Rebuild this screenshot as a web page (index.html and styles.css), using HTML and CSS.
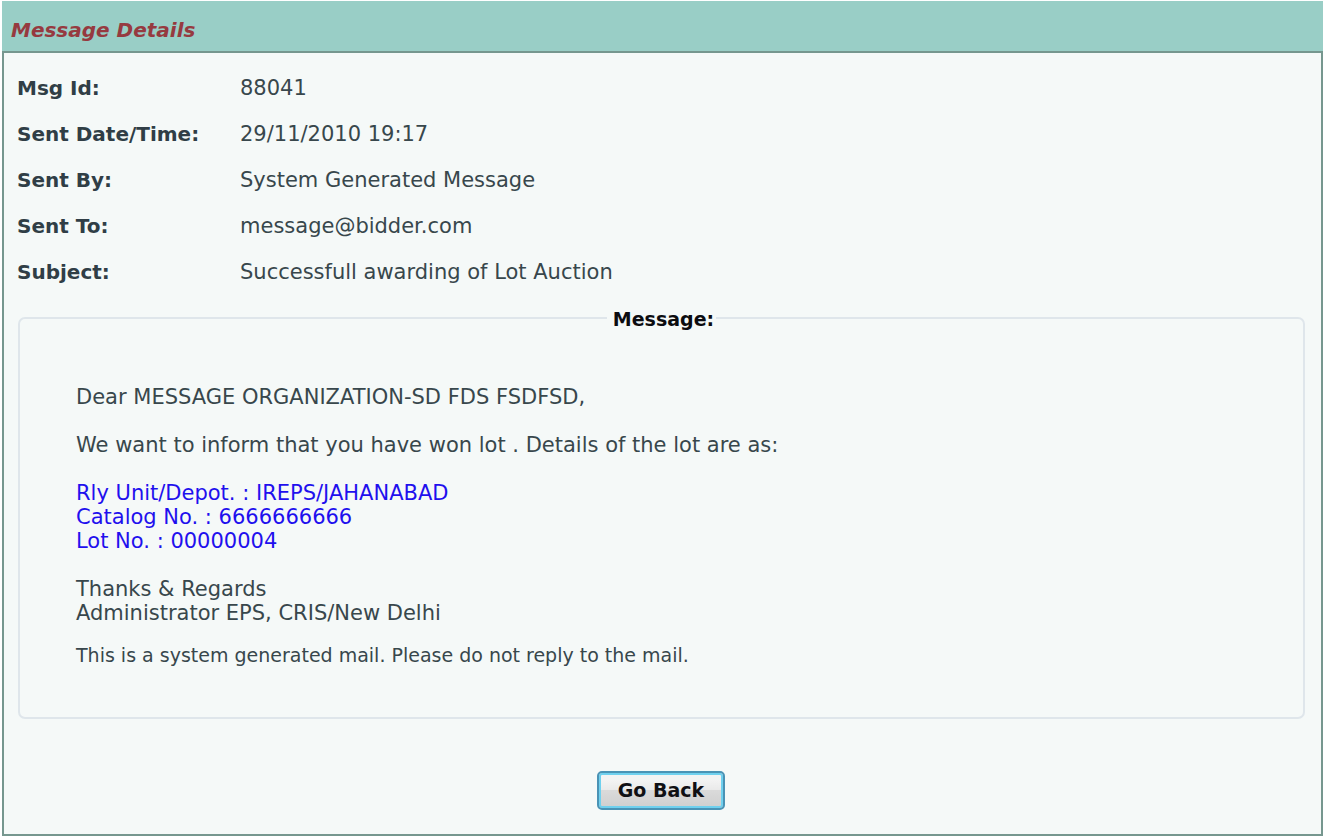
FILE: index.html
```html
<!DOCTYPE html>
<html lang="en">
<head>
<meta charset="utf-8">
<title>Message Details</title>
<link rel="stylesheet" href="styles.css">
</head>
<body>
<main class="panel">
  <h1 class="panel-title">Message Details</h1>
  <div class="panel-body">
    <table class="details">
      <tbody>
        <tr><th scope="row">Msg Id:</th><td>88041</td></tr>
        <tr><th scope="row">Sent Date/Time:</th><td>29/11/2010 19:17</td></tr>
        <tr><th scope="row">Sent By:</th><td>System Generated Message</td></tr>
        <tr><th scope="row">Sent To:</th><td>message@bidder.com</td></tr>
        <tr><th scope="row">Subject:</th><td>Successfull awarding of Lot Auction</td></tr>
      </tbody>
    </table>
    <fieldset class="message">
      <legend>Message:</legend>
      <p>Dear MESSAGE ORGANIZATION-SD FDS FSDFSD,</p>
      <p>We want to inform that you have won lot . Details of the lot are as:</p>
      <p class="lot">Rly Unit/Depot. : IREPS/JAHANABAD<br>Catalog No. : 6666666666<br>Lot No. : 00000004</p>
      <p class="signature">Thanks &amp; Regards<br>Administrator EPS, CRIS/New Delhi</p>
      <p class="note">This is a system generated mail. Please do not reply to the mail.</p>
    </fieldset>
    <div class="actions">
      <button type="button" class="back">Go Back</button>
    </div>
  </div>
</main>
</body>
</html>
```
FILE: styles.css
```css
* {
  box-sizing: border-box;
}

body {
  margin: 0;
  padding: 1px 1px 2px 2px;
  background: #fff;
  color: #38474c;
  font: 21px/24px "DejaVu Sans", Verdana, sans-serif;
}

.panel-title {
  margin: 0;
  padding: 17px 9px 9px;
  background: #99cec6;
  color: #963a40;
  font-size: 20px;
  font-style: italic;
  line-height: 24px;
}

.panel-body {
  padding: 12px 16px 24px 13px;
  border: 2px solid #76978f;
  background: #f5f9f8;
}

.details {
  width: 100%;
  border-collapse: collapse;
}

.details th,
.details td {
  height: 46px;
  padding: 0;
  text-align: left;
}

.details th {
  width: 223px;
  color: #303e46;
  font-size: 20px;
}

.message {
  min-width: 0;
  margin: 9px 0 0 1px;
  padding: 54px 56px 50px;
  border: 2px solid #dfe6eb;
  border-radius: 7px;
}

.message legend {
  margin: 0 auto;
  padding: 3px 2px 0 6px;
  color: #0c0c10;
  font-size: 19px;
  font-weight: bold;
  line-height: 24px;
}

.message p {
  margin: 0 0 24px;
}

.message .lot {
  color: #1f10ee;
}

.message .signature {
  margin-bottom: 18px;
}

.message .note {
  margin: 0;
  font-size: 19px;
}

.actions {
  display: flex;
  justify-content: center;
  padding-top: 52px;
}

.back {
  padding: 5px 19px;
  border: 2px solid #4a93b5;
  border-radius: 5px;
  background: linear-gradient(#f3f3f3 0 20%, #e9e9e9 50%, #dadada 50%, #cfcfcf);
  box-shadow: inset 0 0 0 2px #6fd0ee;
  color: #101014;
  font: bold 19px/25px "DejaVu Sans", Verdana, sans-serif;
}
```
